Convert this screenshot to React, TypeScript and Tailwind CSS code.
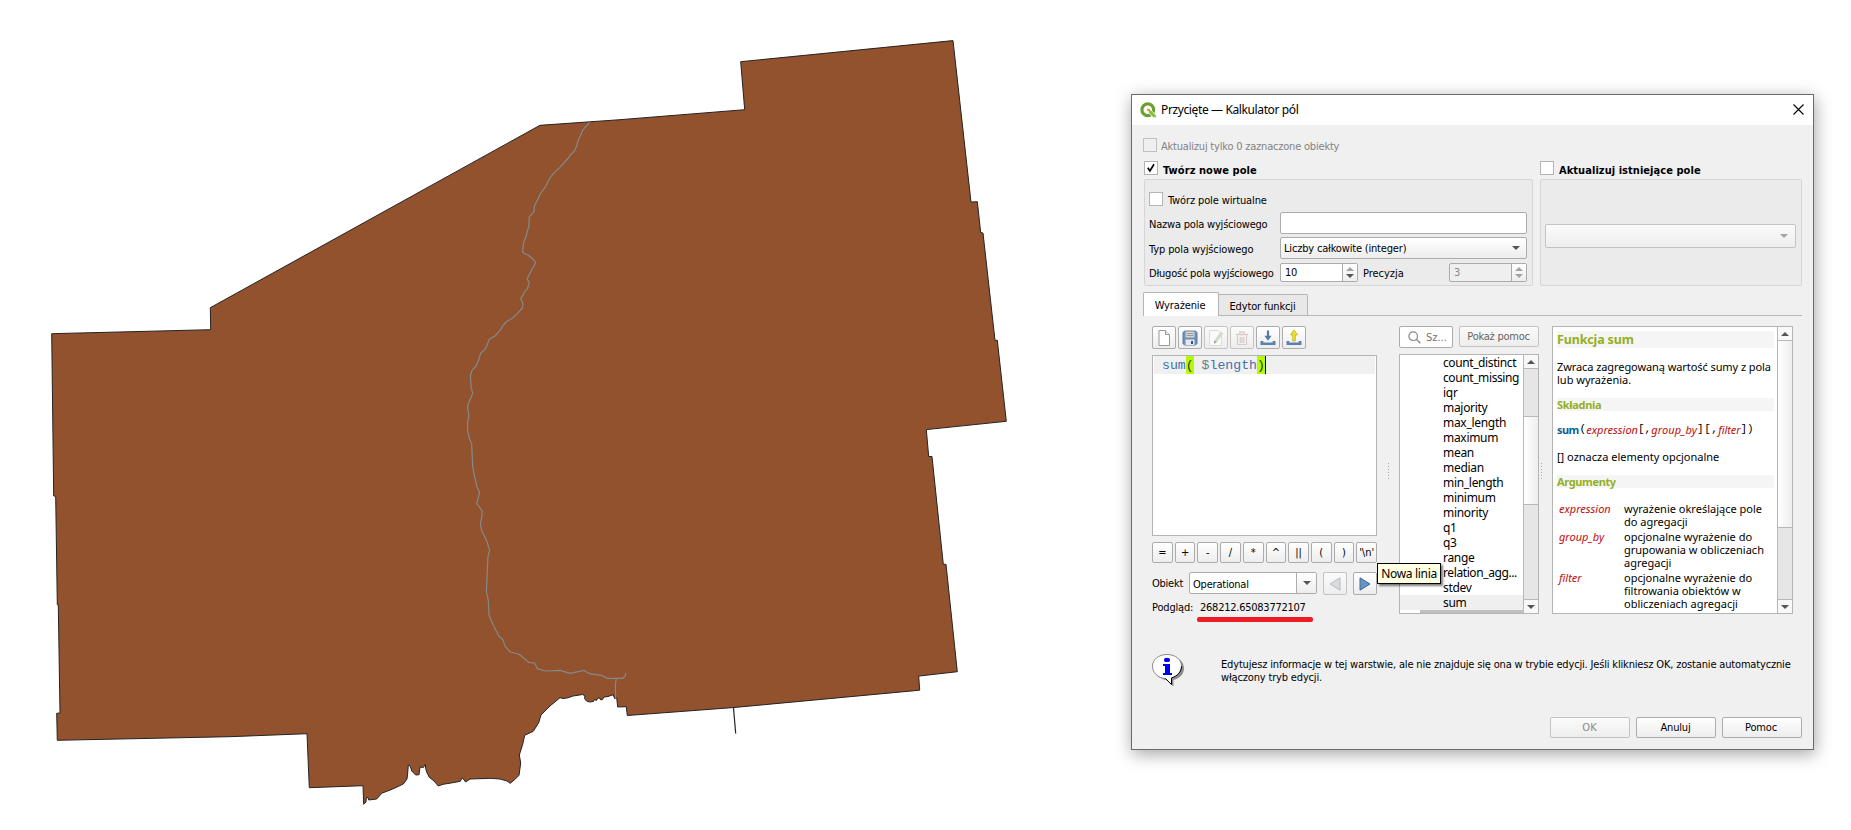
import React from 'react';

const FUNCTIONS = [
  'count_distinct', 'count_missing', 'iqr', 'majority', 'max_length', 'maximum', 'mean', 'median', 'min_length',
  'minimum', 'minority', 'q1', 'q3', 'range', 'relation_agg...', 'stdev', 'sum',
];
const OPERATORS = ['=', '+', '-', '/', '*', '^', '||', '(', ')', "'\\n'"];

const BTN = 'box-border flex items-center justify-center rounded-[2px] border border-[#acacac] bg-linear-to-b from-white to-[#ededed]';
const BTN_OFF = 'box-border flex items-center justify-center rounded-[2px] border border-[#c4c4c4] bg-linear-to-b from-[#fbfbfb] to-[#ededed]';

function Arrow({ up = false, off = false }: { up?: boolean; off?: boolean }) {
  return (
    <svg width="8" height="4" viewBox="0 0 8 4" className="block">
      <path d={up ? 'M0 4 L4 0 L8 4Z' : 'M0 0 L8 0 L4 4Z'} fill={off ? '#a3a3a3' : '#555'} />
    </svg>
  );
}

function Check({ on = false, off = false }: { on?: boolean; off?: boolean }) {
  return (
    <span className={`box-border block h-[14px] w-[14px] shrink-0 border ${off ? 'border-[#c0c0c0] bg-[#efefef]' : 'border-[#b4b4b4] bg-white'}`}>
      {on && (
        <svg width="12" height="12" viewBox="0 0 12 12" className="block">
          <path d="M2.8 5.8 L4.9 9 L9 2.2" fill="none" stroke="#000" strokeWidth="1.7" />
        </svg>
      )}
    </span>
  );
}

function Spin({ value, off = false }: { value: string; off?: boolean }) {
  return (
    <div className={`box-border flex h-[19px] w-[78px] rounded-[2px] border border-[#acacac] ${off ? 'bg-[#efefef] text-[#8a8a8a]' : 'bg-white'}`}>
      <span className="grow pl-[4px] leading-[18px] tracking-[-0.3px]">{value}</span>
      <span className="flex w-[15px] flex-col items-center justify-center gap-[3px] border-l border-[#acacac] bg-linear-to-b from-white to-[#ededed]">
        <Arrow up off />
        <Arrow off={off} />
      </span>
    </div>
  );
}

function ScrollBar({ before, handle }: { before: string; handle: string }) {
  return (
    <div className="box-border flex h-full w-[15px] shrink-0 flex-col border-l border-[#b8b8b8] bg-[#e6e6e6]">
      <div className="flex h-[14px] shrink-0 items-center justify-center border-b border-[#b8b8b8] bg-[#f8f8f8]"><Arrow up /></div>
      <div className={`shrink-0 ${before}`} />
      <div className={`box-border shrink-0 border-b border-[#b8b8b8] bg-linear-to-r from-white to-[#eee] ${handle}`} />
      <div className="grow" />
      <div className="flex h-[14px] shrink-0 items-center justify-center border-t border-[#b8b8b8] bg-[#f8f8f8]"><Arrow /></div>
    </div>
  );
}

function Grip() {
  return <div className="h-[17px] w-px bg-[repeating-linear-gradient(180deg,#a8a8a8_0_1px,transparent_1px_3px)]" />;
}

function Map() {
  return (
    <svg width="1100" height="830" viewBox="0 0 1100 830" className="block shrink-0">
      <path
        d="M51.7 333.7 L210.7 329.7 L210.3 307.7 L540 125.3 L620 119.7 L744.7 109.7 L740.7 61.7 L953 40.6 L971 202.1 L977.3 201.7 L980.7 232.5 L983 233 L995 340.3 L997.3 340.3 L1006.3 421.3 L926.3 429.6 L928.7 456.5 L932 456.5 L943.3 564.3 L946 564.3 L957.3 671.7 L918.7 676.1 L919.7 690.2 L734 707.5 L627.3 715.5 L626.3 706.7 L617.7 707 L616.7 697.7 L614.5 698.5 L613.3 694.7 L608 696.5 L604 697 L602.5 699.5 L600.5 699.8 L599.5 697.8 L597.5 698.5 L596.5 700.5 L594.5 699.5 L593.5 701.5 L589.5 702 L586.5 701 L584.5 698.5 L585 696 L582.7 694.5 L573 696 L568 697.8 L563 698.5 L560 697.7 L550 706 L541 715 L538.7 722.7 L533.3 731.3 L524.7 735.3 L522.7 744.3 L519.3 755 L520.7 763 L519 775.3 L515.3 779 L510.3 783.3 L507 781 L500 779 L491 778.3 L470 779 L465.7 782 L462.3 777.7 L460.3 781.3 L451 783 L443 784.3 L438.3 786 L434 781 L429.3 777.3 L426.7 772 L425.7 768.7 L425.3 764.5 L423.3 767.5 L420 767 L419 774.7 L415.7 775 L411.7 771 L410.3 766 L408.3 765 L407.7 773 L407 779 L403.3 784 L392.7 789 L381.7 793.3 L376.7 799 L368.7 800 L368 797.3 L366.3 798 L366 802 L363.7 804.3 L363 785.7 L309.3 787.7 L307 733.7 L230 736.7 L57.3 740.3 L56.7 713.3 L60 713 L58.3 605 L57.3 604.7 L55.7 496.3 L53.7 496Z"
        fill="#91522d" stroke="#232323" strokeWidth="1" strokeLinejoin="round"
      />
      <path d="M733.5 708 L735.7 733.5" stroke="#232323" strokeWidth="1.2" fill="none" />
      <g transform="translate(440 100) scale(.33333)" fill="none" stroke="#85898a" strokeWidth="3.6" strokeLinejoin="round">
        <path d="M449 67 L438 79 L428 91 L421 107 L414 122 L410 138 L402 155 L391 165 L385 174 L359 203 L336 225 L327 239 L315 263 L303 278 L294 297 L283 318 L282 335 L268 350 L266 383 L262 392 L259 408 L252 423 L249 440 L248 457 L255 462 L264 465 L278 476 L287 488 L275 510 L261 537 L268 547 L262 567 L253 575 L250 585 L242 595 L249 611 L247 624 L230 643 L217 655 L198 666 L189 677 L180 691 L165 708 L148 718 L140 738 L134 749 L123 758 L116 780 L108 798 L96 811 L91 828 L93 848 L93 862 L98 878 L95 889 L84 913 L83 924 L87 948 L83 965 L83 993 L88 1016 L95 1030 L98 1100 L104 1132 L111 1160 L119 1178 L110 1210 L126 1232 L126 1248 L121 1270 L125 1292 L140 1322 L149 1352 L144 1368 L139 1475 L145 1502 L147 1545 L157 1570 L177 1609 L188 1618 L196 1640 L211 1656 L236 1662 L268 1688 L284 1689 L292 1706 L316 1713 L360 1711 L391 1720 L432 1711 L446 1720 L488 1727 L501 1735 L548 1735 L556 1727 L557 1719" />
        <path d="M529 1735 L526 1755 L527 1795" />
      </g>
    </svg>
  );
}

function Logo() {
  return (
    <svg width="17" height="17" viewBox="0 0 17 17" className="block">
      <circle cx="7.8" cy="7.8" r="5.9" fill="none" stroke="#69a032" strokeWidth="3.2" />
      <path d="M8 6.8 L10.6 7.8 L16.2 13.4 V15.8 H13.4 L8.6 10.8Z" fill="#8dbb3e" stroke="#fff" strokeWidth=".8" />
      <path d="M6.8 6.4 L10 7.2 L7.8 9.6Z" fill="#ee7913" />
    </svg>
  );
}

const TOOL_ICONS = [
  <svg key="new" width="16" height="18" viewBox="0 0 16 18"><path d="M3 1.5 h6.5 l4 4 v11 h-10.5z" fill="#fff" stroke="#999" /><path d="M9.5 1.5 v4 h4" fill="#eee" stroke="#999" /></svg>,
  <svg key="save" width="16" height="16" viewBox="0 0 16 16"><path d="M1 2.5 L2.5 1 H13.5 L15 2.5 V13.5 L13.5 15 H2.5 L1 13.5Z" fill="#6f8fb4" stroke="#5a7da6" /><rect x="3.5" y="1.5" width="9" height="6" fill="#d6d6d6" /><path d="M4.5 3.5h7M4.5 5.5h7" stroke="#9a9a9a" /><rect x="3.5" y="9.5" width="9" height="5.5" fill="#e4e8ec" /><rect x="9" y="11" width="2" height="3" fill="#2f5580" /></svg>,
  <svg key="edit" width="18" height="18" viewBox="0 0 18 18"><path d="M2.5 1.5 h9 l3 3 v12 h-12z" fill="#fafafa" stroke="#dcdcdc" /><path d="M15 3.5 L8.5 12.5" stroke="#d3dccb" strokeWidth="3" /><path d="M7 14.8 L7.3 11.5 L9.8 13.2Z" fill="#999" /></svg>,
  <svg key="delete" width="16" height="16" viewBox="0 0 16 16" fill="none" stroke="#dccaca"><path d="M2 4.5h12M6 4V1.8h4V4" strokeWidth="1.3" /><path d="M3.5 5.5v9h9v-9M6.2 7v6M8 7v6M9.8 7v6" strokeWidth="1.2" /></svg>,
  <svg key="import" width="18" height="18" viewBox="0 0 18 18"><path d="M9 1.5V8" stroke="#4f7cab" strokeWidth="2.2" /><path d="M5.4 6.8h7.2L9 11.8Z" fill="#4f7cab" /><path d="M1.5 12h2.8v1.5h9.4V12h2.8v4h-15z" fill="#5b82ae" /></svg>,
  <svg key="export" width="18" height="18" viewBox="0 0 18 18"><path d="M1.5 12h2.8v1.5h9.4V12h2.8v4h-15z" fill="#5b82ae" /><path d="M9 1 L12.6 5.8 H10.3 V12 H7.7 V5.8 H5.4Z" fill="#f3e02c" stroke="#bfae22" strokeWidth=".8" /></svg>,
];

function FieldGroups() {
  return (
    <div className="flex justify-between">
      <div className="ml-px w-[389px]">
        <div className="flex h-[18px] gap-[5px]">
          <Check on />
          <span className="pt-px font-bold leading-[18px] tracking-[0.07px]">Twórz nowe pole</span>
        </div>
        <div className="box-border flex h-[107px] flex-col rounded-[2px] border border-[#d6d6d6] bg-[#ebebeb] pl-[4px] pt-[12px]">
          <div className="flex h-[20px] gap-[5px]">
            <Check />
            <span className="pt-[2px] leading-[14px] tracking-[-0.13px]">Twórz pole wirtualne</span>
          </div>
          <div className="flex h-[25px]">
            <span className="w-[131px] leading-[25px] tracking-[-0.2px]">Nazwa pola wyjściowego</span>
            <div className="box-border h-[22px] w-[247px] rounded-[2px] border border-[#acacac] bg-white" />
          </div>
          <div className="flex h-[26px]">
            <span className="w-[131px] leading-[25px] tracking-[-0.11px]">Typ pola wyjściowego</span>
            <div className="box-border flex h-[22px] w-[247px] items-center justify-between rounded-[2px] border border-[#acacac] bg-linear-to-b from-white to-[#ededed] pl-[3px] pr-[6px]">
              <span className="pt-[2px] tracking-[-0.18px]">Liczby całkowite (integer)</span>
              <Arrow />
            </div>
          </div>
          <div className="flex">
            <span className="w-[131px] leading-[21px] tracking-[-0.21px]">Długość pola wyjściowego</span>
            <Spin value="10" />
            <span className="ml-[5px] w-[86px] leading-[21px] tracking-[-0.04px]">Precyzja</span>
            <Spin value="3" off />
          </div>
        </div>
      </div>
      <div className="w-[262px]">
        <div className="flex h-[18px] gap-[5px]">
          <Check />
          <span className="pt-px font-bold leading-[18px] tracking-[0.05px]">Aktualizuj istniejące pole</span>
        </div>
        <div className="box-border h-[107px] rounded-[2px] border border-[#d6d6d6] bg-[#ebebeb] px-[4px] pt-[44px]">
          <div className="box-border flex h-[24px] w-[251px] items-center justify-end rounded-[2px] border border-[#c4c4c4] bg-linear-to-b from-[#fbfbfb] to-[#ededed] pr-[7px]">
            <Arrow off />
          </div>
        </div>
      </div>
    </div>
  );
}

function Editor() {
  return (
    <div className="w-[225px]">
      <div className="flex gap-[2px]">
        {TOOL_ICONS.map((icon, i) => (
          <span key={i} className={`h-[23px] w-[24px] ${i === 2 || i === 3 ? BTN_OFF : BTN}`}>{icon}</span>
        ))}
      </div>
      <div className="mt-[6px] box-border h-[181px] border border-[#b4b4b4] bg-white px-px">
        <div className="flex h-[18px] items-stretch bg-[#f0f0f0] pl-[8px] font-['Liberation_Mono',monospace] text-[13.2px] leading-[19px] text-[#4271ae]">
          <span>sum</span>
          <span className="bg-[#b4fa00] text-[#333]">(</span>
          <span className="whitespace-pre"> <span className="text-[#6b7f80]">$</span>length</span>
          <span className="border-r border-black bg-[#b4fa00] text-[#333]">)</span>
        </div>
      </div>
      <div className="mt-[6px] flex gap-[2px]">
        {OPERATORS.map((op) => (
          <span key={op} className={`h-[21px] min-w-0 flex-1 ${BTN}`}>{op}</span>
        ))}
      </div>
      <div className="mt-[9px] flex h-[24px]">
        <span className="w-[37px] leading-[24px] tracking-[-0.25px]">Obiekt</span>
        <div className="box-border flex h-[22px] w-[128px] rounded-[2px] border border-[#acacac] bg-white">
          <span className="w-[106px] pl-[3px] leading-[23px] tracking-[-0.21px]">Operational</span>
          <span className="flex grow items-center justify-center border-l border-[#acacac] bg-linear-to-b from-white to-[#ededed]"><Arrow /></span>
        </div>
        <span className={`ml-[6px] h-[23px] w-[24px] ${BTN_OFF}`}>
          <svg width="12" height="14" viewBox="0 0 12 14"><path d="M11 .8 V13.2 L1 7Z" fill="#d9dcdf" stroke="#b5bac0" /></svg>
        </span>
        <span className={`ml-[6px] h-[23px] w-[24px] ${BTN}`}>
          <svg width="12" height="14" viewBox="0 0 12 14"><path d="M1 .8 V13.2 L11 7Z" fill="#6a93c2" stroke="#3d6a9c" /></svg>
        </span>
      </div>
      <div className="mt-[3px] flex h-[18px] leading-[18px]">
        <span className="w-[48px] tracking-[-0.17px]">Podgląd:</span>
        <span className="tracking-[-0.25px]">268212.65083772107</span>
      </div>
      <div className="ml-[45px] h-[5px] w-[116px] rounded-[2px] bg-[#ed1c24]" />
    </div>
  );
}

function FunctionList() {
  return (
    <div className="flex w-[140px] flex-col">
      <div className="flex h-[28px] justify-between text-[#757575]">
        <div className="box-border flex h-[22px] w-[54px] items-center gap-[5px] rounded-[2px] border border-[#acacac] bg-white pl-[8px]">
          <svg width="13" height="13" viewBox="0 0 13 13" fill="none" stroke="#888" className="shrink-0"><circle cx="5.2" cy="5.2" r="4.3" strokeWidth="1.2" /><path d="M8.3 8.3 L12.3 12.3" strokeWidth="1.4" /></svg>
          <span className="pt-[2px]">Sz...</span>
        </div>
        <div className={`h-[21px] w-[80px] text-[#666] ${BTN_OFF}`}><span className="-ml-px tracking-[-0.25px]">Pokaż pomoc</span></div>
      </div>
      <div className="box-border flex h-[260px] border border-[#b4b4b4] bg-white">
        <div className="flex grow flex-col font-['Noto_Sans',sans-serif] text-[12px] leading-[15px]">
          {FUNCTIONS.map((fn) => (
            <div key={fn} className={`h-[15px] whitespace-nowrap pl-[43px] ${fn === 'sum' ? 'bg-[#efefef]' : ''} ${fn.length > 12 ? 'tracking-[-0.4px]' : 'tracking-[-0.3px]'}`}>{fn}</div>
          ))}
          <div className="ml-[20px] h-[3px] bg-[#c0c0c0]" />
        </div>
        <ScrollBar before="h-[47px]" handle="h-[89px] border-t" />
      </div>
    </div>
  );
}

function Help() {
  return (
    <div className="box-border flex h-[288px] w-[241px] border border-[#b4b4b4] bg-white">
      <div className="grow overflow-hidden whitespace-nowrap pl-[4px] pt-[4px] font-['Noto_Sans',sans-serif] leading-[13px]">
        <div className="h-[17px] w-[217px] bg-[#f5f5f5] text-[12.5px] font-bold leading-[18px] tracking-[-0.15px] text-[#93b023]">Funkcja sum</div>
        <div className="mt-[12px] tracking-[-0.08px]">Zwraca zagregowaną wartość sumy z pola</div>
        <div>lub wyrażenia.</div>
        <div className="mt-[12px] h-[13px] w-[217px] bg-[#f5f5f5] font-bold leading-[14px] tracking-[-0.33px] text-[#93b023]">Składnia</div>
        <div className="mt-[11px] flex h-[14px] items-center">
          <span className="font-bold tracking-[-0.6px] text-[#0a6099]">sum</span>
          <span className="ml-px font-['Liberation_Mono',monospace]">(</span>
          <i className="text-[#bf0c0c]">expression</i>
          <span className="font-['Liberation_Mono',monospace]">[,</span>
          <i className="tracking-[0.1px] text-[#bf0c0c]">group_by</i>
          <span className="font-['Liberation_Mono',monospace] tracking-[0.5px]">][,</span>
          <i className="tracking-[-0.1px] text-[#bf0c0c]">filter</i>
          <span className="font-['Liberation_Mono',monospace]">])</span>
        </div>
        <div className="mt-[14px]">[] oznacza elementy opcjonalne</div>
        <div className="mt-[12px] h-[13px] w-[217px] bg-[#f5f5f5] font-bold leading-[14px] tracking-[-0.36px] text-[#93b023]">Argumenty</div>
        <div className="mt-[14px] grid grid-cols-[65px_1fr] gap-y-[2px] pl-[2px]">
          <i className="text-[#bf0c0c]">expression</i>
          <div>wyrażenie określające pole<br />do agregacji</div>
          <i className="text-[#bf0c0c]">group_by</i>
          <div>opcjonalne wyrażenie do<br />grupowania w obliczeniach<br />agregacji</div>
          <i className="text-[#bf0c0c]">filter</i>
          <div>opcjonalne wyrażenie do<br />filtrowania obiektów w<br />obliczeniach agregacji</div>
        </div>
      </div>
      <ScrollBar before="h-0" handle="h-[187px]" />
    </div>
  );
}

function InfoIcon() {
  return (
    <svg width="33" height="33" viewBox="0 0 33 33" className="block shrink-0">
      <path d="M17 2.5 C26 2.5 32 7.5 32 14 C32 20 28 24 21.5 26 V32.5 L15 26.5 C7 25 3 20 3 14Z" fill="#8c8c8c" />
      <path d="M15 .5 C23.5 .5 29.5 5.5 29.5 12.2 C29.5 18 25.5 22 19.5 24 V30.5 L13.5 24.5 C5.5 24 .5 18.5 .5 12.2 C.5 5.5 6.5 .5 15 .5Z" fill="#fff" stroke="#888" />
      <path d="M29.5 12.2 C29.5 18 25.5 22 19.5 24 V30.5 L13.5 24.5" fill="none" stroke="#000" />
      <ellipse cx="15" cy="5.9" rx="3" ry="2.2" fill="#0000f0" />
      <path d="M11 10 H18 V19 H20 V21 H11 V19 H13 V12 H11Z" fill="#0000f0" />
    </svg>
  );
}

function Dialog() {
  return (
    <div className="absolute left-[1131px] top-[94px] box-border h-[656px] w-[683px] border border-[#6a6a6a] bg-[#f0f0f0] shadow-[1px_4px_16px_rgba(0,0,0,0.36)]">
      <div className="flex h-[30px] items-center bg-white pl-[8px] pr-[9px]">
        <Logo />
        <span className="ml-[4px] grow font-['Noto_Sans',sans-serif] text-[12px] tracking-[-0.38px]">Przycięte — Kalkulator pól</span>
        <svg width="11" height="11" viewBox="0 0 11 11" className="-mt-[2px]"><path d="M.5 .5 L10.5 10.5 M10.5 .5 L.5 10.5" stroke="#000" strokeWidth="1.1" /></svg>
      </div>
      <div className="px-[11px] pt-[13px]">
        <div className="flex h-[23px] gap-[5px] text-[#838383]">
          <Check off />
          <span className="-ml-px pt-px leading-[15px] tracking-[-0.2px]">Aktualizuj tylko 0 zaznaczone obiekty</span>
        </div>
        <FieldGroups />
        <div className="mt-[6px] flex h-[24px] items-end border-b border-[#b8b8b8]">
          <span className="-mb-px flex h-[24px] w-[76px] items-center justify-center rounded-t-[2px] border border-b-0 border-[#b4b4b4] bg-white pr-[2px] pt-[2px] tracking-[-0.14px]">Wyrażenie</span>
          <span className="flex h-[21px] w-[89px] items-center justify-center rounded-tr-[2px] border border-b-0 border-l-0 border-[#b4b4b4] bg-[#e8e8e8] pr-px pt-[3px] tracking-[-0.16px]">Edytor funkcji</span>
        </div>
        <div className="mt-[10px] flex h-[288px] pl-[9px]">
          <Editor />
          <div className="flex w-[22px] justify-center pt-[137px]"><Grip /></div>
          <FunctionList />
          <div className="flex w-[13px] pl-[2px] pt-[137px]"><Grip /></div>
          <Help />
        </div>
        <div className="mt-[40px] flex h-[63px] pl-[9px]">
          <InfoIcon />
          <p className="ml-[36px] whitespace-nowrap pt-[4px] leading-[13px]">
            <span className="tracking-[-0.165px]">Edytujesz informacje w tej warstwie, ale nie znajduje się ona w trybie edycji. Jeśli klikniesz OK, zostanie automatycznie</span><br />
            <span className="tracking-[-0.165px]">włączony tryb edycji.</span>
          </p>
        </div>
        <div className="flex h-[21px] justify-end gap-[6px]">
          <span className={`w-[80px] pr-px pt-px text-[#8a8a8a] ${BTN_OFF}`}>OK</span>
          <span className={`w-[80px] pr-px pt-px tracking-[-0.2px] ${BTN}`}>Anuluj</span>
          <span className={`w-[80px] pr-[2px] pt-px tracking-[-0.2px] ${BTN}`}>Pomoc</span>
        </div>
      </div>
      <div className="absolute left-[245px] top-[468px] box-border flex h-[21px] w-[64px] items-center justify-center whitespace-nowrap border border-black bg-[#ffffe1] font-['Noto_Sans',sans-serif] text-[12px] tracking-[-0.32px] shadow-[2px_2px_2px_rgba(0,0,0,0.5)]">Nowa linia</div>
    </div>
  );
}

export default function App() {
  return (
    <main className="relative h-[830px] w-[1851px] overflow-hidden bg-white font-['DejaVu_Sans_Condensed','DejaVu_Sans',sans-serif] text-[11px] leading-[14px] text-black [font-stretch:condensed]">
      <Map />
      <Dialog />
    </main>
  );
}
